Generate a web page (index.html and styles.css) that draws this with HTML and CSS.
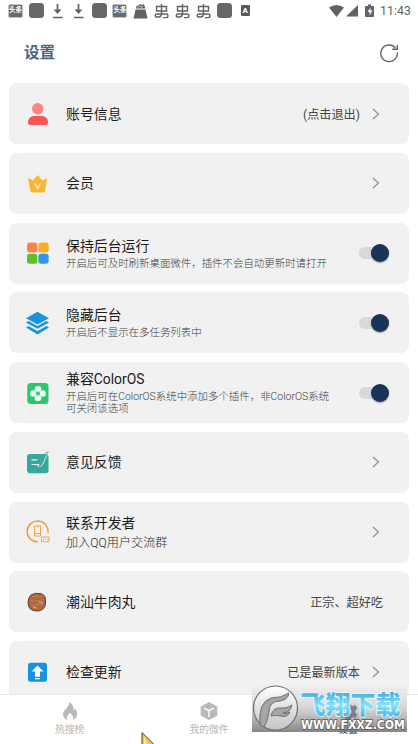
FILE: index.html
```html
<!DOCTYPE html>
<html lang="zh-CN">
<head>
<meta charset="utf-8">
<title>设置</title>
<link rel="stylesheet" href="styles.css">
</head>
<body>
<div class="screen">
  <div class="status">
    <div class="notices">
      <span class="slot"><b class="news">头条</b></span>
      <span class="slot"><i class="block"></i></span>
      <span class="slot"><svg width="15" height="16" viewBox="0 0 15 16"><path d="M7.500 1v8M3 14.500h9.500" class="dl"/><path d="M3.500 6.500h8l-4 4.500z" fill="#626262"/></svg></span>
      <span class="slot"><svg width="15" height="16" viewBox="0 0 15 16"><path d="M7.500 1v8M3 14.500h9.500" class="dl"/><path d="M3.500 6.500h8l-4 4.500z" fill="#626262"/></svg></span>
      <span class="slot"><i class="block"></i></span>
      <span class="slot"><b class="news">头条</b></span>
      <span class="slot"><svg width="15" height="16" viewBox="0 0 15 16"><path d="M2.500 6.500h10L14.500 15.500H.5zM3 5.500l.5-2.500L6 2l1-1 2 1 2-1 .5 2 1 2.500z" fill="#626262"/><path d="M4.500 4.500l2-1.500 1.500 1.500L10 3" stroke="#fff" stroke-width=".7" fill="none"/></svg></span>
      <span class="slot"><svg width="15" height="16" viewBox="0 0 15 16"><path class="bug" d="M2.500 3.500h10V8h-10zM7.500 1v9.500q0 3.500-3 3.500H3q-1.800 0-1.800-1.500T3 11h9q2 0 2 1.800t-2 1.800H9"/></svg></span>
      <span class="slot"><svg width="15" height="16" viewBox="0 0 15 16"><path class="bug" d="M2.500 3.500h10V8h-10zM7.500 1v9.500q0 3.500-3 3.500H3q-1.800 0-1.800-1.500T3 11h9q2 0 2 1.800t-2 1.800H9"/></svg></span>
      <span class="slot"><svg width="15" height="16" viewBox="0 0 15 16"><path class="bug" d="M2.500 3.500h10V8h-10zM7.500 1v9.500q0 3.500-3 3.500H3q-1.800 0-1.800-1.500T3 11h9q2 0 2 1.800t-2 1.800H9"/></svg></span>
      <span class="slot"><i class="block"></i></span>
      <span class="slot"><b class="letter">A</b></span>
    </div>
    <svg class="signals" width="46" height="14" viewBox="0 0 46 14"><path d="M0 3.500Q7.500-1.500 15 3.500L7.500 13zM29 1v11.500H17zM37 2h2V.5h3V2h2q1 0 1 1v9q0 1-1 1h-7q-1 0-1-1V3q0-1 1-1z" fill="#626262"/><path d="M41.500 3.500L38.500 8h2v3.500l3-5h-2z" fill="#fff"/></svg>
    <span class="clock">11:43</span>
  </div>

  <header class="top">
    <h1>设置</h1>
    <svg width="20" height="20" viewBox="0 0 20 20"><path d="M16.400 5A8.300 8.300 0 1 0 18.300 9.500M18.300 2v4.200h-5" fill="none" stroke="#666" stroke-width="1.400"/></svg>
  </header>

  <main class="list">
    <section class="card">
      <svg class="icon" viewBox="0 0 24 24"><circle cx="11.700" cy="6.800" r="5.700" fill="#fb8585"/><path d="M2 20.500Q2.500 14 8 14h8q5.500 0 6 6.500 0 2.500-2 2.500H4q-2 0-2-2.500z" fill="#f95555"/></svg>
      <div class="text"><h2>账号信息</h2></div>
      <span class="value">(点击退出)</span>
      <svg class="arrow" viewBox="0 0 8 12"><path d="M1 1l5.500 5L1 11"/></svg>
    </section>
    <section class="card">
      <svg class="icon" viewBox="0 0 24 24"><path d="M2 8q0-1 1.200-.5L7 9.500l4.200-5q.5-.6 1 0l4.200 5 3.600-2q1.200-.5 1 .5l-2 12.500q-.2 1-1.200 1H5.800q-1 0-1.200-1z" fill="#f7b733"/><path d="M9 12.500l2.700 4.800 2.700-4.800" fill="none" stroke="#fff2cf" stroke-width="1.300"/></svg>
      <div class="text"><h2>会员</h2></div>
      <svg class="arrow" viewBox="0 0 8 12"><path d="M1 1l5.500 5L1 11"/></svg>
    </section>
    <section class="card">
      <svg class="icon" viewBox="0 0 24 24"><rect x="1" y="1.500" width="10.300" height="10" rx="2.700" fill="#ff8052"/><rect x="12.400" y="1.500" width="10.300" height="10" rx="2.700" fill="#feac20"/><rect x="1" y="12.700" width="10.300" height="10" rx="2.700" fill="#58c322"/><rect x="12.400" y="12.700" width="10.300" height="10" rx="2.700" fill="#3595ed"/></svg>
      <div class="text"><h2>保持后台运行</h2><p>开启后可及时刷新桌面微件，插件不会自动更新时请打开</p></div>
      <span class="switch"></span>
    </section>
    <section class="card">
      <svg class="icon" viewBox="0 0 24 24"><path d="M11.500.7L23 7.300l-11.500 6.300L0 7.300zM0 11.500l2.500-1.400 9 5 9-5L23 11.500l-11.500 6.300zM0 16.500l2.500-1.400 9 5 9-5 2.500 1.400-11.500 7z" fill="#1794dc"/></svg>
      <div class="text"><h2>隐藏后台</h2><p>开启后不显示在多任务列表中</p></div>
      <span class="switch"></span>
    </section>
    <section class="card">
      <svg class="icon" viewBox="0 0 24 24"><rect x="1.300" y="2" width="21.200" height="21" rx="3.500" fill="#28c96e"/><g fill="#effbf3"><path d="M9 9.500l6 6M15 9.500l-6 6" stroke="#8fe0b1" stroke-width="2"/><ellipse cx="12" cy="7.800" rx="3.300" ry="2.900"/><ellipse cx="12" cy="17.200" rx="3.300" ry="2.900"/><ellipse cx="7.100" cy="12.500" rx="2.900" ry="3.200"/><ellipse cx="16.900" cy="12.500" rx="2.900" ry="3.200"/></g><circle cx="12" cy="12.500" r="1.700" fill="#28c96e"/></svg>
      <div class="text"><h2>兼容ColorOS</h2><p class="tight">开启后可在ColorOS系统中添加多个插件，非ColorOS系统可关闭该选项</p></div>
      <span class="switch"></span>
    </section>
    <section class="card">
      <svg class="icon" viewBox="0 0 24 24"><rect x="1" y="4" width="21.500" height="19.300" rx="3" fill="#37a69b"/><path d="M5.500 9.800h6M5.500 14.500h8M11.500 14.500q2 5 5.500-1L22 2" fill="none" stroke="#e8f7f4" stroke-width="1.200"/><path d="M22.500 1l-7 14-2 2 .8-3.500 6.500-12" fill="none" stroke="#37a69b" stroke-width=".7"/></svg>
      <div class="text"><h2>意见反馈</h2></div>
      <svg class="arrow" viewBox="0 0 8 12"><path d="M1 1l5.500 5L1 11"/></svg>
    </section>
    <section class="card">
      <svg class="icon" viewBox="0 0 24 24" fill="none" stroke="#ed9b3d"><path d="M11.800 22A10.500 10.500 0 1 1 22 13" stroke-width="1.400"/><path d="M8.500 6h6v10h-6zM8.500 13.500h6M10.500 6.800h2M15.500 17h7.500v4.500h-3l-1.200 1.300-.8-1.300h-2.500zM17 19.200h1M19 19.200h1M21 19.200h1" stroke-width=".9"/></svg>
      <div class="text"><h2>联系开发者</h2><p class="large">加入QQ用户交流群</p></div>
      <svg class="arrow" viewBox="0 0 8 12"><path d="M1 1l5.500 5L1 11"/></svg>
    </section>
    <section class="card">
      <svg class="icon" viewBox="0 0 24 24"><path d="M5 5Q9 2.500 14 3.500q5.500 1 5.500 6v5q-1.500 6.500-8.500 6.500-9 0-9-8.500Q2 8 5 5z" fill="#ad693f" stroke="#6b3a24" stroke-width="1"/><path d="M6 7l3-1 4 1 3-1M4 11l4-1 5 1 4-2M5 15l4 1 3-2 5 1M8 18.500l5-1" fill="none" stroke="#c58355" stroke-width=".8"/><path d="M13 12l4 1M7 17l3 1" stroke="#ead3bd" stroke-width=".7"/></svg>
      <div class="text"><h2>潮汕牛肉丸</h2></div>
      <span class="value last">正宗、超好吃</span>
    </section>
    <section class="card">
      <svg class="icon" viewBox="0 0 24 24"><rect x="2" y="2.800" width="19" height="19" rx="2.500" fill="#1593dc"/><path d="M11.500 5.500L17.500 11.500H14v5.300H9v-5.300H5.500zM9 18h5v1.300H9z" fill="#fff"/></svg>
      <div class="text"><h2>检查更新</h2></div>
      <span class="value">已是最新版本</span>
      <svg class="arrow" viewBox="0 0 8 12"><path d="M1 1l5.500 5L1 11"/></svg>
    </section>
  </main>

  <nav class="tabs">
    <div class="tab"><svg width="20" height="20" viewBox="0 0 20 20"><path d="M9.500 1q0 3-3 6.500Q3 10 3 13q0 4.500 4.500 6-2-4 2.500-7 4.500 3.500 2.500 7 4.500-1.500 4.700-6 0-3-2.200-6-.5 2-1.500 2.500Q14 4 9.500 1z" fill="#b9b9b9"/></svg><span>热搜榜</span></div>
    <div class="tab"><svg width="20" height="20" viewBox="0 0 20 20"><path d="M10 1l8.300 4.500v9L10 19l-8.300-4.500v-9z" fill="#b9b9b9"/><path d="M5 7.200l5 2.500 5-2.500M10 9.700V16" fill="none" stroke="#fff" stroke-width="1.400"/></svg><span>我的微件</span></div>
    <div class="tab active"><svg width="20" height="20" viewBox="0 0 20 20"><path fill-rule="evenodd" d="M8 1h4l.6 2.700 2 1.200 2.700-.9 2 3.500-2 1.900v2.300l2 1.900-2 3.500-2.700-.9-2 1.200L12 20H8l-.6-2.600-2-1.200-2.700.9-2-3.500 2-1.900V9.400l-2-1.900 2-3.500 2.700.9 2-1.200zM10 7a3.500 3.500 0 1 0 .01 0z" fill="#1a3459"/></svg><span>设置</span></div>
  </nav>

  <svg class="stamp" width="156" height="49" viewBox="0 0 156 49">
    <defs>
      <linearGradient id="shade" x2="0" y2="1"><stop stop-color="#f2f2f2" stop-opacity=".6"/><stop offset=".5" stop-color="#b8b8b8" stop-opacity=".6"/><stop offset="1" stop-color="#707070" stop-opacity=".85"/></linearGradient>
      <linearGradient id="sky" x2="0" y2="1"><stop stop-color="#3ba9da"/><stop offset=".5" stop-color="#85e2f8"/><stop offset="1" stop-color="#34abd9"/></linearGradient>
      <linearGradient id="disc" x2="0" y2="1"><stop stop-color="#fff"/><stop offset="1" stop-color="#c4c4c4"/></linearGradient>
    </defs>
    <rect width="155" height="48" fill="url(#shade)"/>
    <circle cx="23.500" cy="24" r="22" fill="url(#disc)" stroke="#707070" stroke-width="1.200"/>
    <path d="M8 41Q6 18 19 14q10 0 18-5-1 7-9 8-11 0-11 11-1 8-5 15zM19 32q2-9 10-8 6 1 11-3-2 8-9 8 4 1 7-1-3 6-9 4-4-1-10 0z" fill="#a5a5a5" stroke="#666" stroke-width=".9"/>
    <text x="48.500" y="30" class="brand" textLength="100" lengthAdjust="spacingAndGlyphs">飞翔下载</text>
    <text x="49" y="44.500" class="site" textLength="104" lengthAdjust="spacingAndGlyphs">WWW.FXXZ.COM</text>
  </svg>
  <svg class="cursor" width="14" height="13" viewBox="0 0 14 13"><path d="M1 .5l12 12V14H1z" fill="#ecc94b" stroke="#4b4536"/><path d="M3 4l3 9H3z" fill="#fff0a0"/></svg>
</div>
</body>
</html>
```

FILE: styles.css
```css
* { box-sizing: border-box; }
body {
  margin: 0;
  background: #fff;
  font-family: Roboto, "Noto Sans CJK SC", sans-serif;
}
h1, h2, p { margin: 0; }
svg { display: block; flex: none; }
.screen {
  position: relative;
  width: 418px;
  height: 744px;
  overflow: hidden;
  display: flex;
  flex-direction: column;
}
.status {
  height: 22px;
  flex: none;
  display: flex;
  align-items: center;
  padding: 0 7px 1px 5px;
  color: #626262;
}
.notices { display: flex; }
.slot {
  width: 20.9px;
  height: 16px;
  display: flex;
  align-items: center;
  justify-content: center;
}
.block { width: 15px; height: 15px; border-radius: 3.5px; background: #676767; }
.news {
  width: 15px;
  height: 14px;
  border: 1px solid #c4c4c4;
  border-radius: 2px;
  background: #6a6a6a;
  color: #fff;
  font-size: 6.5px;
  line-height: 11px;
  text-align: center;
  white-space: nowrap;
}
.letter {
  width: 9px;
  height: 11px;
  border-radius: 1px;
  background: #595959;
  color: #fff;
  font-size: 8px;
  line-height: 11px;
  text-align: center;
}
.dl { fill: none; stroke: #626262; stroke-width: 1.7; }
.bug { fill: none; stroke: #626262; stroke-width: 1.4; }
.signals { margin-left: auto; }
.clock { margin-left: 5px; font-size: 12.3px; width: 31px; white-space: nowrap; letter-spacing: .1px; }
.top {
  height: 61px;
  flex: none;
  display: flex;
  justify-content: space-between;
  align-items: center;
  padding: 0 19px 0 24px;
}
.top h1 { font-size: 15.6px; line-height: 20px; font-weight: 700; color: #4b6384; }
.list {
  flex: 1;
  min-height: 0;
  overflow: hidden;
  padding: 0 9px;
  display: flex;
  flex-direction: column;
  gap: 8.75px;
}
.card {
  height: 61px;
  flex: none;
  border-radius: 8px;
  background: #f1f1f1;
  display: flex;
  align-items: center;
  padding: 0 28px 0 17px;
}
.icon { width: 24px; height: 24px; }
.text { margin-left: 16px; width: 272px; flex: none; }
.text:has(+ .value) { width: 150px; }
h2 { font-size: 13.9px; line-height: 18px; font-weight: 400; color: #1c1c1c; }
.text p { font-size: 10.45px; line-height: 12px; font-weight: 300; color: #3c3c3c; margin-top: 3px; white-space: nowrap; }
.text p.tight { margin-top: 3px; width: 264px; white-space: normal; word-break: break-all; }
.text p.large { font-size: 12.15px; line-height: 16px; color: #2e2e2e; }
.value { margin-left: auto; margin-right: 12px; font-size: 12.15px; color: #444; white-space: nowrap; }
.value.last { margin-right: -2px; }
.arrow { width: 8px; height: 12px; margin-left: auto; margin-right: 1px; }
.value + .arrow { margin-left: 0; }
.arrow path { fill: none; stroke: #8b8b8b; stroke-width: 1.1; }
.switch {
  width: 30px;
  height: 12px;
  margin-left: auto;
  margin-right: -8px;
  flex: none;
  display: flex;
  align-items: center;
  justify-content: flex-end;
  background: #d8d8d8;
  border-radius: 6px;
}
.switch::after { content: ""; flex: none; width: 18px; height: 18px; border-radius: 50%; background: #1a3459; box-shadow: 0 1px 1.5px #0005; }
.tabs {
  height: 50px;
  flex: none;
  display: grid;
  grid-template-columns: repeat(3, 1fr);
  border-top: 1px solid #e9e9e9;
  background: #fff;
}
.tab { display: flex; flex-direction: column; align-items: center; padding-top: 6px; color: #b5b5b5; font-size: 9.8px; line-height: 14px; gap: 2px; }
.tab.active { color: #1a3459; }
.stamp { position: absolute; left: 252px; top: 684px; }
.brand { font-size: 25px; font-weight: 900; fill: url(#sky); stroke: #eefaff; stroke-width: 1.6px; paint-order: stroke; }
.site { font-family: "DejaVu Sans", sans-serif; font-size: 11.5px; font-weight: 700; fill: #fff; stroke: #555; stroke-width: 1.4px; paint-order: stroke; }
.cursor { position: absolute; left: 141px; top: 732px; }
```
